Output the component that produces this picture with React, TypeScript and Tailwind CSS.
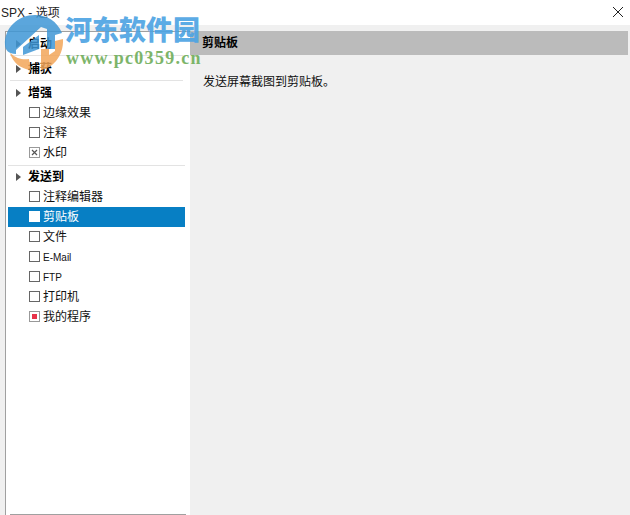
const font = { fontFamily: '"Liberation Sans", "Noto Sans CJK SC", sans-serif' };

function Check({ state, active }: { state?: "x" | "red"; active?: boolean }) {
  return (
    <span
      className={`mb-[1px] flex h-[11px] w-[11px] shrink-0 items-center justify-center border ${
        active ? "border-white bg-white" : state ? "border-[#999999]" : "border-[#666666] bg-white"
      }`}
    >
      {state === "x" && (
        <svg width="7" height="7" viewBox="0 0 7 7">
          <path d="M1 1L6 6M6 1L1 6" stroke="#555" strokeWidth="1.2" />
        </svg>
      )}
      {state === "red" && <span className="h-[5px] w-[5px] bg-[#e8334a]" />}
    </span>
  );
}

function Head({ label, sep }: { label: string; sep?: boolean }) {
  return (
    <div>
      <div className="flex h-5 items-center pl-[8px]">
        <svg width="5" height="8" viewBox="0 0 5 8" className="mb-[1px] mr-[7px]">
          <path d="M0 0L5 4L0 8Z" fill="#555555" />
        </svg>
        <span className="text-[12px] font-bold text-black">{label}</span>
      </div>
      {sep && <div className="mx-[2px] my-[1px] h-px bg-[#e3e3e3]" />}
    </div>
  );
}

function Item({ label, state, active, small }: { label: string; state?: "x" | "red"; active?: boolean; small?: boolean }) {
  return (
    <div className={`flex h-5 items-center pl-[21px] ${active ? "bg-[#077fc4] text-white" : "text-[#111111]"}`}>
      <Check state={state} active={active} />
      <span className={`ml-[3px] ${small ? "text-[10px]" : "text-[12px]"}`}>{label}</span>
    </div>
  );
}

export default function App() {
  return (
    <div className="relative flex h-[515px] w-[630px] flex-col overflow-hidden bg-white" style={font}>
      <div className="flex h-[25px] shrink-0 items-center justify-between pl-[1px] pr-[6px]">
        <span className="text-[12px] text-[#222222]">SPX - 选项</span>
        <svg width="12" height="12" viewBox="0 0 12 12" className="mb-[1px]">
          <path d="M1 1L11 11M11 1L1 11" stroke="#222" strokeWidth="1" />
        </svg>
      </div>
      <div className="flex min-h-0 flex-1 bg-[#f0f0f0] pl-[5px] pt-[6px]">
        <div className="flex w-[185px] shrink-0 flex-col border-l border-t border-[#a0a0a0] bg-white">
          <div className="flex-1 pl-[2px] pr-[5px] pt-[2px]">
            <Head label="启动" sep />
            <div className="h-[2px]" />
            <Head label="捕获" sep />
            <div className="h-px" />
            <Head label="增强" />
            <Item label="边缘效果" />
            <Item label="注释" />
            <Item label="水印" state="x" />
            <div className="mb-[1px] mt-[2px] h-px bg-[#e3e3e3]" />
            <Head label="发送到" />
            <Item label="注释编辑器" />
            <Item label="剪贴板" active />
            <Item label="文件" />
            <Item label="E-Mail" small />
            <Item label="FTP" small />
            <Item label="打印机" />
            <Item label="我的程序" state="red" />
          </div>
          <div className="ml-[4px] mr-[4px] h-px bg-[#a0a0a0]" />
        </div>
        <div className="flex min-w-0 flex-1 flex-col">
          <div className="mr-[2px] flex h-[24px] items-center bg-[#bbbbbb] pl-[12px] text-[12px] font-bold text-black">剪贴板</div>
          <div className="pl-[13px] pt-[18px] text-[12px] text-[#111111]">发送屏幕截图到剪贴板。</div>
        </div>
      </div>

      <div className="pointer-events-none absolute left-[3px] top-[13px] h-[60px] w-[62px] opacity-85">
        <svg width="62" height="60" viewBox="0 0 62 60">
          <path d="M2 32C1 15 15 2 32 2C44 2 54 8 59 20L52 22L52 36L44 36L44 16L38 14L13 37L13 41C6 41 2 37 2 32Z" fill="#3f97d6" />
          <path d="M20 34L36 22L36 36L20 42Z" fill="#3f97d6" />
          <path d="M60 26C61 44 48 56 38 57L38 36L46 36L46 42L52 38L52 28Z" fill="#f3a65a" />
          <path d="M7 40C14 46 20 47 26 46L28 57C18 56 10 50 7 40Z" fill="#f3a65a" />
        </svg>
      </div>
      <div className="pointer-events-none absolute left-[65px] top-[11px] text-[27px] font-black leading-[36px] text-[#4ba3e3] opacity-90" style={{ fontFamily: '"Noto Sans CJK SC", sans-serif' }}>
        河东软件园
      </div>
      <div className="pointer-events-none absolute left-[66px] top-[48px] text-[18px] font-bold leading-[20px] tracking-[1.3px] text-[#6fae5a] opacity-90" style={{ fontFamily: '"Liberation Serif", serif' }}>
        www.pc0359.cn
      </div>
    </div>
  );
}
